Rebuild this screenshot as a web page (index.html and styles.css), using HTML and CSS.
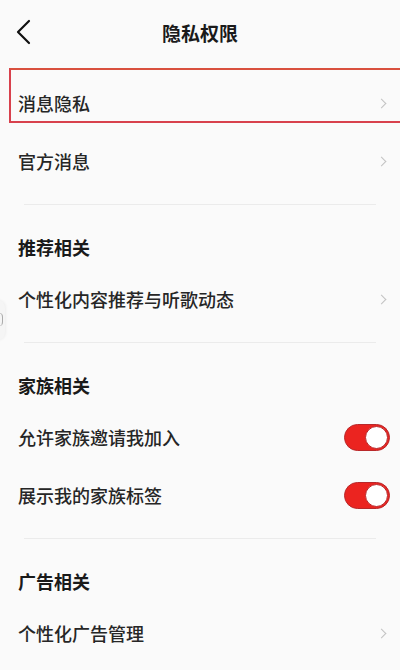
FILE: index.html
```html
<!DOCTYPE html>
<html>
    <head>
        <meta charset="utf-8">
        <title>隐私权限</title>
        <link rel="stylesheet" href="styles.css">
    </head>
    <body>

        <div class="page">

            <div class="header">
                <div class="back">
                    <svg width="20" height="26" viewBox="0 0 20 26">
                        <polyline points="13,2 2,13 13,24" fill="none" stroke="#111" stroke-width="2.2" stroke-linecap="round" stroke-linejoin="round"/>
                    </svg>
                </div>
                <div class="title">隐私权限</div>
                <div></div>
            </div>

            <div class="group first">
                <div class="row link marked">
                    <span class="label">消息隐私</span>
                    <span class="chevron"></span>
                    <div class="mark"></div>
                </div>
                <div class="row link">
                    <span class="label">官方消息</span>
                    <span class="chevron"></span>
                </div>
            </div>

            <div class="divider"></div>

            <div class="group">
                <div class="group-title">推荐相关</div>
                <div class="row link">
                    <span class="label">个性化内容推荐与听歌动态</span>
                    <span class="chevron"></span>
                </div>
            </div>

            <div class="divider"></div>

            <div class="group">
                <div class="group-title">家族相关</div>
                <div class="row">
                    <span class="label">允许家族邀请我加入</span>
                    <span class="switch on"></span>
                </div>
                <div class="row">
                    <span class="label">展示我的家族标签</span>
                    <span class="switch on"></span>
                </div>
            </div>

            <div class="divider"></div>

            <div class="group">
                <div class="group-title">广告相关</div>
                <div class="row link">
                    <span class="label">个性化广告管理</span>
                    <span class="chevron"></span>
                </div>
            </div>

            <div class="side-handle"></div>

        </div>

    </body>
</html>
```

FILE: styles.css
```css
/** Page **/
html, body {
    margin: 0;
    padding: 0;
    background-color: #fafafa;
}
.page {
    position: relative;
    width: 400px;
    height: 670px;
    overflow: hidden;
    font-family: "Noto Sans CJK SC", "Noto Sans", sans-serif;
    color: #222;
}

/** Header **/
.header {
    display: grid;
    grid-template-columns: 60px 1fr 60px;
    align-items: center;
    height: 64px;
}
.header .back {
    display: flex;
    align-items: center;
    padding-left: 16px;
    padding-bottom: 1px;
}
.header .title {
    text-align: center;
    font-size: 19px;
    font-weight: bold;
    color: #1a1a1a;
}

/** Groups **/
.group.first {
    padding-top: 10px;
}
.group-title {
    padding: 31px 18px 12px;
    font-size: 18px;
    line-height: 22px;
    font-weight: bold;
    color: #1a1a1a;
}
.divider {
    height: 1px;
    margin: 14px 24px 0;
    background-color: #ebebeb;
}

/** Rows **/
.row {
    position: relative;
    display: flex;
    align-items: center;
    justify-content: space-between;
    height: 58px;
    padding: 0 10px 0 18px;
}
.row .label {
    font-size: 18px;
    font-weight: 500;
    color: #262626;
}
.chevron {
    width: 6px;
    height: 6px;
    margin-right: 5px;
    border-top: 1.5px solid #c2c2c2;
    border-right: 1.5px solid #c2c2c2;
    transform: rotate(45deg);
}

/** Switch **/
.switch {
    position: relative;
    width: 46px;
    height: 27px;
    box-sizing: border-box;
    border-radius: 14px;
    background-color: #eb2420;
    border: 1px solid #b8282a;
}
.switch::after {
    content: "";
    position: absolute;
    top: 1px;
    right: 1px;
    width: 23px;
    height: 23px;
    box-sizing: border-box;
    border-radius: 50%;
    background-color: #fff;
    border: 1px solid #b8282a;
}

/** Annotation **/
.mark {
    position: absolute;
    top: -6px;
    left: 9px;
    right: -4px;
    height: 55px;
    box-sizing: border-box;
    border: 2px solid #d8414d;
    border-top-color: #d9503e;
    pointer-events: none;
}

/** Floating side handle **/
.side-handle {
    position: absolute;
    left: -6px;
    top: 300px;
    width: 11px;
    height: 40px;
    border-radius: 0 8px 8px 0;
    background-color: #f5f5f5;
    box-shadow: 1px 0 3px rgba(0, 0, 0, 0.05);
}
.side-handle::after {
    content: "";
    position: absolute;
    left: 5px;
    top: 13px;
    width: 3px;
    height: 13px;
    border-right: 1px solid #aaa;
    border-radius: 0 6px 6px 0;
}
```
